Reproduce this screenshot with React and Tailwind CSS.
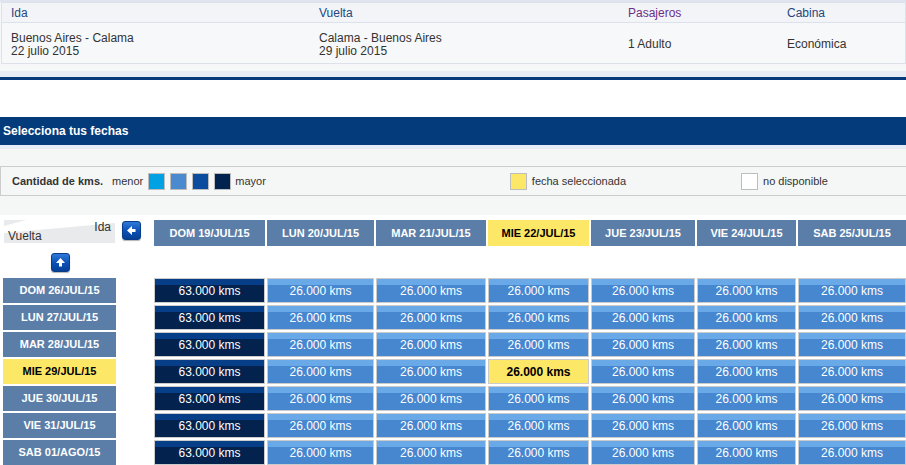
import React from 'react'

const cols = [
  { label: 'DOM 19/JUL/15', w: 'w-[111px]' },
  { label: 'LUN 20/JUL/15', w: 'w-[107px]' },
  { label: 'MAR 21/JUL/15', w: 'w-[110px]' },
  { label: 'MIE 22/JUL/15', w: 'w-[101px]', selected: true },
  { label: 'JUE 23/JUL/15', w: 'w-[104px]' },
  { label: 'VIE 24/JUL/15', w: 'w-[99px]' },
  { label: 'SAB 25/JUL/15', w: 'w-[108px]' },
]

const rows = [
  'DOM 26/JUL/15',
  'LUN 27/JUL/15',
  'MAR 28/JUL/15',
  'MIE 29/JUL/15',
  'JUE 30/JUL/15',
  'VIE 31/JUL/15',
  'SAB 01/AGO/15',
]

const ArrowButton = ({ dir }) => (
  <div className="w-[19px] h-[19px] rounded-[3px] border border-[#083c86] bg-[linear-gradient(to_bottom,#2f78d8,#0a4fb2_55%,#063f96)] shadow-[0_1px_1px_rgba(0,0,0,0.3)] flex items-center justify-center">
    <svg width="17" height="17" viewBox="0 0 17 17">
      {dir === 'left' ? (
        <path d="M4 8.5 L9 4 V7 H12.5 V10 H9 V13 Z" fill="#fff" />
      ) : (
        <path d="M8.5 4 L13 9 H10 V12.5 H7 V9 H4 Z" fill="#fff" />
      )}
    </svg>
  </div>
)

const Cell = ({ w, kind }) => {
  if (kind === 'sel') {
    return (
      <div className={`${w} h-[25px] border border-[#cbcbcb] bg-[#fde767] flex items-center justify-center text-[12px] font-bold text-black`}>
        26.000 kms
      </div>
    )
  }
  if (kind === 'dark') {
    return (
      <div className={`${w} h-[25px] border border-[#cbcbcb] bg-[linear-gradient(to_bottom,#063f87_6px,#03224e_6px)] flex items-center justify-center text-[12px] text-white`}>
        63.000 kms
      </div>
    )
  }
  return (
    <div className={`${w} h-[25px] border border-[#cbcbcb] bg-[linear-gradient(to_bottom,#6aa9e8_6px,#4687d0_6px)] flex items-center justify-center text-[12px] text-white`}>
      26.000 kms
    </div>
  )
}

export default function App() {
  return (
    <div className="w-[906px] h-[465px] overflow-hidden bg-white font-['Liberation_Sans',Arial,sans-serif] text-[#333]">
      {/* Resumen del viaje */}
      <div className="bg-[#f6f7f8]">
        <div className="h-[2px] bg-[#dfe4ef]"></div>
        <div className="ml-[1px] border border-[#dde2ea] text-[12px]">
          <div className="h-[20px] bg-[#f2f4f8] border-b border-[#dde2ea] grid grid-cols-[308px_309px_159px_1fr] items-center text-[#24477e]">
            <span className="pl-[9px]">Ida</span>
            <span className="pl-[9px]">Vuelta</span>
            <span className="pl-[9px] text-[#6c2f86]">Pasajeros</span>
            <span className="pl-[9px]">Cabina</span>
          </div>
          <div className="h-[40px] bg-[#f7f8f9] grid grid-cols-[308px_309px_159px_1fr] items-center leading-[13px]">
            <div className="pl-[9px] mt-[4px]">
              <div>Buenos Aires - Calama</div>
              <div>22 julio 2015</div>
            </div>
            <div className="pl-[9px] mt-[4px]">
              <div>Calama - Buenos Aires</div>
              <div>29 julio 2015</div>
            </div>
            <div className="pl-[9px] mt-[3px]">1 Adulto</div>
            <div className="pl-[9px] mt-[3px]">Económica</div>
          </div>
        </div>
        <div className="h-[7px]"></div>
        <div className="h-[6px] bg-[#e6ebf4]"></div>
        <div className="h-[3px] bg-[#043a7a]"></div>
      </div>

      <div className="h-[37px]"></div>

      {/* Selecciona tus fechas */}
      <div className="h-[28px] bg-[#043b7b] flex items-center pl-[3px] text-white font-bold text-[12px]">
        Selecciona tus fechas
      </div>
      <div className="h-[4px] bg-[#e6ecf6]"></div>

      <div className="bg-[#f5f7f7] pt-[17px] pb-[19px]">
        <div className="h-[30px] border border-r-0 border-[#cccccc] flex items-center text-[11px] text-[#333]">
          <span className="ml-[11px] font-bold">Cantidad de kms.</span>
          <span className="ml-[9px]">menor</span>
          <span className="ml-[5px] w-[17px] h-[17px] border border-[#bdbdbd] bg-[#00a2e3]"></span>
          <span className="ml-[5px] w-[17px] h-[17px] border border-[#bdbdbd] bg-[#4a8bd0]"></span>
          <span className="ml-[5px] w-[17px] h-[17px] border border-[#bdbdbd] bg-[#0b4c9e]"></span>
          <span className="ml-[5px] w-[17px] h-[17px] border border-[#bdbdbd] bg-[#03234f]"></span>
          <span className="ml-[4px]">mayor</span>
          <span className="ml-[244px] w-[17px] h-[17px] border border-[#bdbdbd] bg-[#fde767]"></span>
          <span className="ml-[5px]">fecha seleccionada</span>
          <span className="ml-[115px] w-[17px] h-[17px] border border-[#bdbdbd] bg-white"></span>
          <span className="ml-[5px]">no disponible</span>
        </div>
      </div>

      {/* Calendario */}
      <div className="bg-white pt-[5px]">
        <div className="flex h-[26px]">
          <div className="w-[154px] flex items-start">
            <div className="relative ml-[4px] w-[111px] h-[23px] bg-[#e9eaec] text-[12px] text-[#333] overflow-hidden">
              <svg className="absolute inset-0" width="111" height="23" viewBox="0 0 111 23">
                <polygon points="22,0 111,0 111,3 0,13 0,6" fill="#fff" />
              </svg>
              <span className="absolute right-[4px] top-[0px] leading-[14px]">Ida</span>
              <span className="absolute left-[4px] bottom-[0px] leading-[14px]">Vuelta</span>
            </div>
            <div className="ml-[7px] mt-[1px]">
              <ArrowButton dir="left" />
            </div>
          </div>
          <div className="flex gap-[2px]">
            {cols.map((c) => (
              <div
                key={c.label}
                className={`${c.w} h-[26px] flex items-center justify-center text-[11px] font-bold ${
                  c.selected ? 'bg-[#fde767] text-black' : 'bg-[#5b7ea8] text-white'
                }`}
              >
                {c.label}
              </div>
            ))}
          </div>
        </div>

        <div className="flex mt-[7px] h-[19px]">
          <div className="ml-[51px]">
            <ArrowButton dir="up" />
          </div>
        </div>

        <div className="mt-[6px] flex flex-col gap-[2px]">
          {rows.map((r, ri) => (
            <div key={r} className="flex h-[25px]">
              <div className="w-[154px]">
                <div
                  className={`ml-[3px] w-[113px] h-[25px] flex items-center justify-center text-[11px] font-bold ${
                    ri === 3 ? 'bg-[#fde767] text-black' : 'bg-[#5b7ea8] text-white'
                  }`}
                >
                  {r}
                </div>
              </div>
              <div className="flex gap-[2px]">
                {cols.map((c, ci) => (
                  <Cell
                    key={c.label}
                    w={c.w}
                    kind={ci === 0 ? 'dark' : ri === 3 && ci === 3 ? 'sel' : 'light'}
                  />
                ))}
              </div>
            </div>
          ))}
        </div>
      </div>
    </div>
  )
}
